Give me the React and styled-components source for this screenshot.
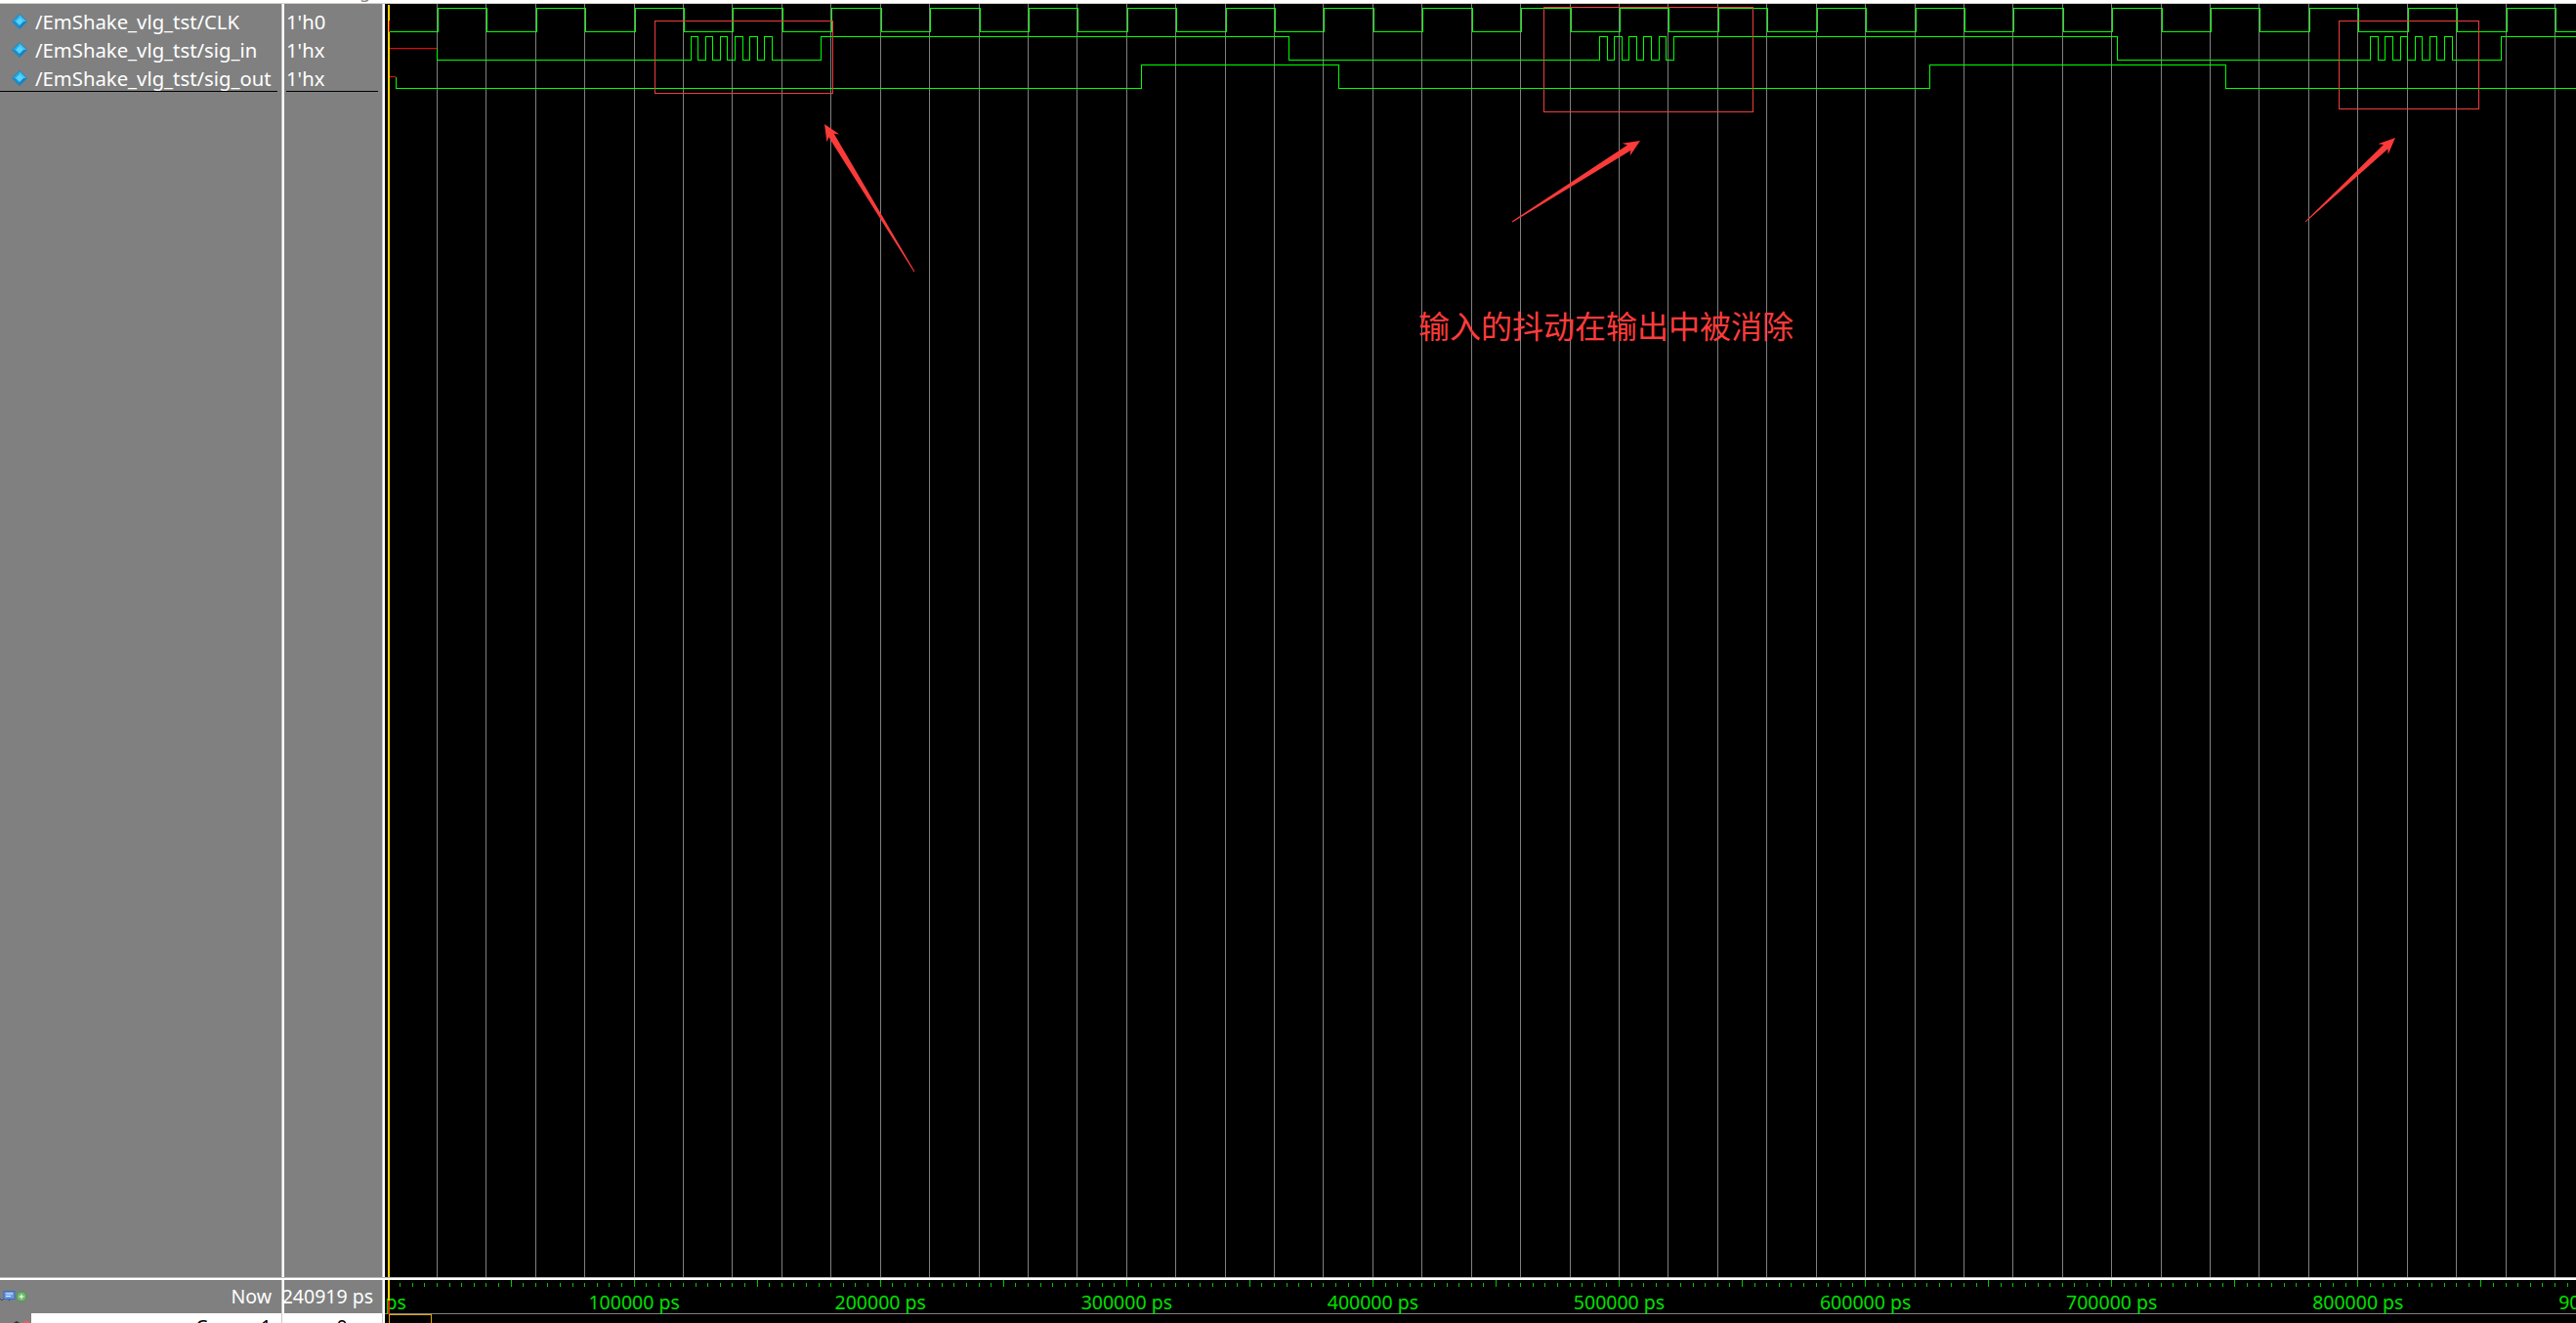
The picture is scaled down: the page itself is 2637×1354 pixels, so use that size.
import React from "react";
import styled, { createGlobalStyle } from "styled-components";

const GlobalStyle = createGlobalStyle`
  html, body {
    margin: 0;
    padding: 0;
    height: 1354px;
    background: #000000;
    overflow: hidden;
  }
`;

const UI_FONT = `"Noto Sans", "Liberation Sans", sans-serif`;

// all the wave coordinates below are page pixels, the svg viewBox starts at the pane corner
const PANE_X = 394;
const PANE_Y = 4;
const PANE_W = 2243;
const PANE_H = 1303;
const ZERO_X = 397;
const EDGE_STEP = 50.42;
const TICK_STEP = 12.605;

const CLK = { high: 8.5, low: 32.5 };
const SIG_IN = { high: 37.5, low: 61.5 };
const SIG_OUT = { high: 66.5, low: 90.5 };

const sigInEdges = [
  707, 714, 722, 729, 737, 744, 752, 760, 767, 775, 782, 790, 840, 1319, 1637, 1645, 1652, 1660,
  1667, 1675, 1682, 1690, 1698, 1705, 1713, 2167, 2426, 2434, 2441, 2449, 2457, 2464, 2472, 2479,
  2487, 2494, 2502, 2510, 2560,
];
const sigOutEdges = [1168, 1370, 1975, 2278];

const gridXs = [];
for (let k = 1; ZERO_X + k * EDGE_STEP < 2637; k++) {
  gridXs.push(Math.floor(ZERO_X + k * EDGE_STEP) + 0.5);
}

const toggles = (startX, edges, levels, endX) => {
  let up = false;
  let d = `M${startX} ${levels.low}`;
  edges.forEach((x) => {
    d += `H${x + 0.5}`;
    up = !up;
    d += `V${up ? levels.high : levels.low}`;
  });
  return d + `H${endX}`;
};

const clkPath = toggles(399, gridXs, CLK, 2637);
const inPath = `M447.5 49.5V61.5` + toggles(447.5, sigInEdges, SIG_IN, 2637);
const outPath = `M405.5 78.5V90.5` + toggles(405.5, sigOutEdges, SIG_OUT, 2637);

const arrowPoints = (tail, tip) => {
  const len = Math.hypot(tail[0] - tip[0], tail[1] - tip[1]);
  const ux = (tail[0] - tip[0]) / len;
  const uy = (tail[1] - tip[1]) / len;
  const at = (along, side) => [tip[0] + ux * along - uy * side, tip[1] + uy * along + ux * side].join(",");
  return [at(0, 0), at(17, 7.5), at(13.5, 3.2), at(len, 0.5), at(len, -0.5), at(13.5, -3.2), at(17, -7.5)].join(" ");
};

const marks = [
  { x: 670.5, y: 21.5, w: 182, h: 74 },
  { x: 1580.5, y: 7.5, w: 214, h: 107 },
  { x: 2394.5, y: 21.5, w: 143, h: 90 },
];

const arrows = [
  { tail: [936, 278], tip: [844, 127] },
  { tail: [1548, 227], tip: [1679, 144] },
  { tail: [2360, 227], tip: [2452, 141] },
];

const signals = [
  { name: "/EmShake_vlg_tst/CLK", value: "1'h0" },
  { name: "/EmShake_vlg_tst/sig_in", value: "1'hx" },
  { name: "/EmShake_vlg_tst/sig_out", value: "1'hx" },
];

const rulerLabels = [0, 1, 2, 3, 4, 5, 6, 7, 8, 9].map((n) => (n === 0 ? "0 ps" : `${n}00000 ps`));

const Page = styled.div`
  width: 2637px;
  height: 1354px;
  display: flex;
  flex-direction: column;
  overflow: hidden;
  background: #808080;
  font-family: ${UI_FONT};
`;

const TopStrip = styled.div`
  height: 4px;
  flex: none;
  box-sizing: border-box;
  background: #ffffff;
  border-bottom: 1px solid #d4d0c8;
  padding-left: 343px;
  overflow: hidden;
  span {
    display: block;
    margin-top: -21px;
    font-size: 18px;
    line-height: 24px;
    color: #808080;
  }
`;

const Columns = styled.div`
  display: flex;
  flex: none;
  height: ${(p) => p.$h}px;
`;

const NameCol = styled.div`
  width: 288px;
  flex: none;
  position: relative;
  overflow: hidden;
`;

const ValueCol = styled.div`
  width: 100px;
  flex: none;
  overflow: hidden;
`;

const Divider = styled.div`
  width: 3px;
  flex: none;
  background: #ffffff;
  box-shadow: inset 1px 0 0 #c8c8c8;
`;

const SignalList = styled.div`
  margin: 2px ${(p) => p.$right}px 0 ${(p) => p.$left}px;
  border-bottom: 1px solid #000000;
`;

const SignalRow = styled.div`
  height: 29px;
  box-sizing: border-box;
  padding-top: 2px;
  display: flex;
  align-items: center;
  color: #ffffff;
  font-size: 20.3px;
  white-space: nowrap;
`;

const DiamondSvg = styled.svg`
  width: 16px;
  height: 16px;
  flex: none;
  margin: 0 8px 0 12px;
`;

const WavePane = styled.div`
  flex: 1;
  position: relative;
  background: #000000;
  overflow: hidden;
`;

const WaveSvg = styled.svg`
  display: block;
`;

const Note = styled.div`
  position: absolute;
  left: 1058px;
  top: 307px;
  font-family: "Noto Sans CJK SC", "Noto Sans", sans-serif;
  font-size: 32px;
  line-height: 42px;
  color: #ff3b3b;
  white-space: nowrap;
`;

const Splitter = styled.div`
  height: 3px;
  flex: none;
  box-sizing: border-box;
  background: #ffffff;
  border-top: 1px solid #b8b8b8;
`;

const NowRow = styled.div`
  height: 34px;
  display: flex;
  align-items: center;
  justify-content: space-between;
  color: #ffffff;
  font-size: 19.5px;
  white-space: nowrap;
  padding: 0 10px 2px 0;
  box-sizing: border-box;
`;

const TimeValue = styled(NowRow)`
  justify-content: flex-end;
  padding-right: 9px;
`;

const ToolIcons = styled.svg`
  width: 28px;
  height: 12px;
  flex: none;
  margin-top: 2px;
`;

const CursorRow = styled.div`
  height: 10px;
  display: flex;
  overflow: hidden;
`;

const CursorIconSlot = styled.div`
  width: 32px;
  flex: none;
  svg {
    display: block;
  }
`;

const CursorCell = styled.div`
  flex: 1;
  background: #ffffff;
  color: #000000;
  font-size: 19.5px;
  line-height: 27px;
  text-align: right;
  padding-right: ${(p) => p.$right}px;
  white-space: nowrap;
  overflow: hidden;
`;

const RulerPane = styled.div`
  flex: 1;
  position: relative;
  background: #000000;
  overflow: hidden;
`;

const RulerTicks = styled.svg`
  display: block;
`;

const RulerLabels = styled.div`
  display: flex;
  height: 27px;
  margin-left: -123px;
  padding-top: 3px;
  align-items: center;
  border-bottom: 1px solid #808080;
  box-sizing: border-box;
`;

const RulerLabel = styled.span`
  width: 252.1px;
  flex: none;
  text-align: center;
  font-size: 19.5px;
  color: #00e000;
  white-space: nowrap;
`;

const CursorFlag = styled.div`
  width: 44px;
  height: 12px;
  margin-left: 4px;
  box-sizing: border-box;
  border: 1px solid #e6a800;
`;

const CursorMark = styled.div`
  position: absolute;
  left: 3px;
  top: 0;
  width: 2px;
  height: 35px;
  background: linear-gradient(#ffd000 0 21px, #e03000 21px 100%);
`;

const Diamond = () => (
  <DiamondSvg viewBox="0 0 16 16">
    <polygon points="8,0 16,8 8,16 0,8" fill="#1583c4" />
    <polygon points="8,1 15,8 8,8" fill="#3fc4f4" />
    <polygon points="8,1 1,8 8,8" fill="#2aa8e4" />
    <polygon points="1,8 8,15 8,8" fill="#1c90d0" />
    <polygon points="8,4 12,8 8,12 4,8" fill="#54d4fa" />
  </DiamondSvg>
);

const Waves = () => (
  <WaveSvg
    width={PANE_W}
    height={PANE_H}
    viewBox={`${PANE_X} ${PANE_Y} ${PANE_W} ${PANE_H}`}
    shapeRendering="crispEdges"
    fill="none"
  >
    {gridXs.map((x) => (
      <line key={x} x1={x} x2={x} y1={PANE_Y} y2={PANE_Y + PANE_H} stroke="#808080" />
    ))}
    <rect x="397" y="5" width="2" height={PANE_H} fill="#ffd000" />
    <path d={clkPath} stroke="#00ff00" />
    <path d={inPath} stroke="#00ff00" />
    <path d={outPath} stroke="#00ff00" />
    <path d="M398.5 21V32.5" stroke="#ff0000" />
    <path d="M399 49.5H447" stroke="#ff0000" />
    <path d="M399 78.5H405" stroke="#ff0000" />
    {marks.map((m) => (
      <rect key={m.x} x={m.x} y={m.y} width={m.w} height={m.h} stroke="#f23c3c" />
    ))}
    {arrows.map((a) => (
      <polygon
        key={a.tip[0]}
        points={arrowPoints(a.tail, a.tip)}
        fill="#fb3a3a"
        shapeRendering="auto"
      />
    ))}
  </WaveSvg>
);

const Ticks = () => {
  const ticks = [];
  for (let i = 0; ZERO_X + i * TICK_STEP < 2637; i++) {
    ticks.push({ x: Math.floor(ZERO_X + i * TICK_STEP) + 0.5, major: i % 10 === 0 });
  }
  return (
    <RulerTicks width={PANE_W} height="8" viewBox={`${PANE_X} 1310 ${PANE_W} 8`} shapeRendering="crispEdges">
      {ticks.slice(1).map((t) => (
        <line key={t.x} x1={t.x} x2={t.x} y1={t.major ? 1310 : 1313} y2="1317" stroke="#00c800" />
      ))}
    </RulerTicks>
  );
};

export default function App() {
  return (
    <Page>
      <GlobalStyle />
      <TopStrip>
        <span>Msgs</span>
      </TopStrip>
      <Columns $h={PANE_H}>
        <NameCol>
          <SignalList $left={0} $right={4}>
            {signals.map((s) => (
              <SignalRow key={s.name}>
                <Diamond />
                {s.name}
              </SignalRow>
            ))}
          </SignalList>
        </NameCol>
        <Divider />
        <ValueCol>
          <SignalList $left={2} $right={4}>
            {signals.map((s) => (
              <SignalRow key={s.name}>{s.value}</SignalRow>
            ))}
          </SignalList>
        </ValueCol>
        <Divider />
        <WavePane>
          <Waves />
          <Note>输入的抖动在输出中被消除</Note>
        </WavePane>
      </Columns>
      <Splitter />
      <Columns $h={44}>
        <NameCol>
          <NowRow>
            <ToolIcons viewBox="0 0 28 12">
              <path d="M0 8l2 2 2-2" stroke="#2a4a8a" fill="none" />
              <rect x="4" y="0.5" width="11" height="8" fill="#6a9ae0" stroke="#3a6ab8" />
              <path d="M6 3h7M6 5.5h5" stroke="#e8f0ff" />
              <path d="M8 9h3l-1.5 2z" fill="#3a6ab8" />
              <circle cx="22" cy="6" r="5" fill="#70b870" stroke="#4a9a4a" />
              <path d="M22 3.5v5M19.5 6h5" stroke="#ffffff" />
            </ToolIcons>
            Now
          </NowRow>
          <CursorRow>
            <CursorIconSlot>
              <svg width="32" height="10" viewBox="0 0 32 10">
                <path d="M14 10l3-2 3 2z" fill="#303030" />
                <circle cx="27" cy="11" r="3.5" fill="#e06060" />
              </svg>
            </CursorIconSlot>
            <CursorCell $right={10}>Cursor 1</CursorCell>
          </CursorRow>
        </NameCol>
        <Divider />
        <ValueCol>
          <TimeValue>240919 ps</TimeValue>
          <CursorRow>
            <CursorCell $right={9}>0 ps</CursorCell>
          </CursorRow>
        </ValueCol>
        <Divider />
        <RulerPane>
          <Ticks />
          <RulerLabels>
            {rulerLabels.map((l) => (
              <RulerLabel key={l}>{l}</RulerLabel>
            ))}
          </RulerLabels>
          <CursorFlag />
          <CursorMark />
        </RulerPane>
      </Columns>
    </Page>
  );
}
